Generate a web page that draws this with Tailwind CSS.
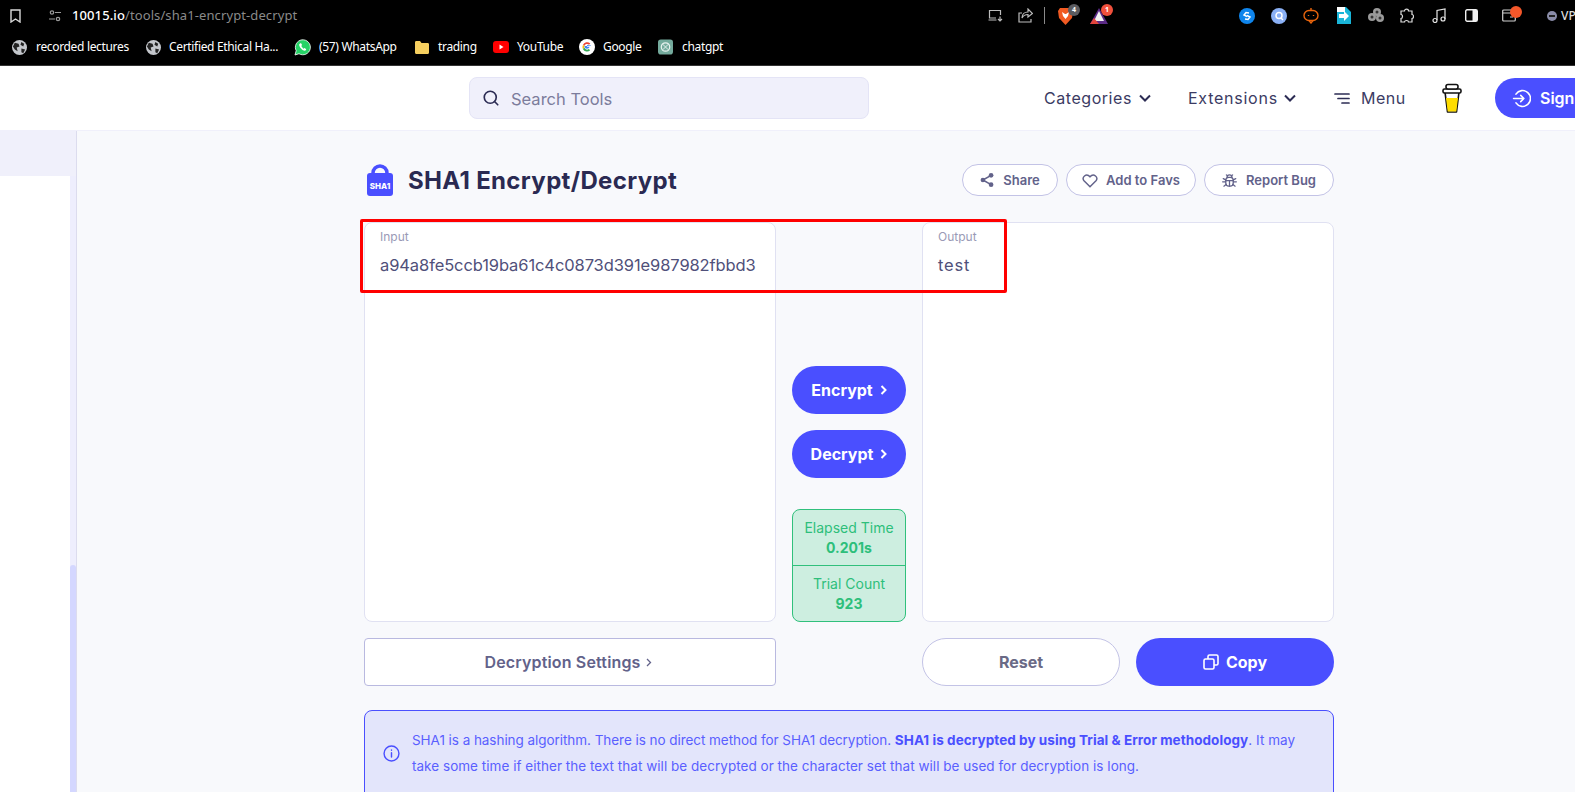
<!DOCTYPE html>
<html>
<head>
<meta charset="utf-8">
<script src="https://cdn.jsdelivr.net/npm/@tailwindcss/browser@4"></script>
</head>
<body class="w-[1575px] h-[792px] overflow-hidden bg-white font-['Inter',sans-serif]">
<div class="relative w-[1575px] h-[792px] overflow-hidden flex flex-col">

  <!-- Browser chrome -->
  <div class="h-[66px] shrink-0 bg-black border-b border-[#333] font-['Noto_Sans',sans-serif] text-white">
    <div class="h-[31px] flex items-center relative">
      <svg class="ml-[10px] w-[11px] h-[14px] shrink-0" viewBox="0 0 11 14" fill="none" stroke="#d8d8d8" stroke-width="1.4"><path d="M1 1h9v12l-4.500-3L1 13z"/></svg>
      <svg class="ml-[28px] w-[12px] h-[12px] shrink-0" viewBox="0 0 12 12" fill="none" stroke="#9a9a9a" stroke-width="1.2"><circle cx="3" cy="2.500" r="1.700"/><path d="M6 2.500h6M0 9h6"/><circle cx="9" cy="9" r="1.700"/></svg>
      <span class="ml-[11px] w-[226px] shrink-0 text-[13px] tracking-[0.1px] whitespace-nowrap font-medium">10015.io<span class="text-[#8a8a8a] font-normal">/tools/sha1-encrypt-decrypt</span></span>

      <svg class="ml-[690px] w-[15px] h-[13px] shrink-0" viewBox="0 0 15 13" fill="none" stroke="#bdbdbd" stroke-width="1.200"><path d="M8 9H1.500V1.500h11V6M.5 11h8M12 7.500v4m-2-1.500 2 2 2-2"/></svg>
      <svg class="ml-[15px] w-[15px] h-[15px] shrink-0" viewBox="0 0 15 15" fill="none" stroke="#bdbdbd" stroke-width="1.200"><path d="M4 5H1v9h12v-3M4 10c0-4 3-6 6-6V1l4.500 4.500L10 9V6.500C7.500 6.500 5 8 4 10z"/></svg>
      <span class="ml-[11px] w-px h-[17px] shrink-0 bg-[#8a8a8a]"></span>
      <span class="ml-[13px] relative w-[15px] h-[18px] shrink-0">
        <svg class="w-[15px] h-[18px]" viewBox="0 0 15 18"><path d="M2 1h11l2 3-1 7-6.500 7L1 11 0 4z" fill="#f15a22"/><path d="M4 5l3 2 1 0 3-2-1 4-2.500 3L5 9z" fill="#fff"/></svg>
        <span class="absolute left-[10px] top-[-3px] w-[12px] h-[12px] rounded-full bg-[#5c5c60] text-[7px] leading-[12px] text-center font-bold">4</span>
      </span>
      <span class="ml-[17px] relative w-[18px] h-[16px] shrink-0">
        <svg class="w-[18px] h-[16px]" viewBox="0 0 18 16"><path d="M9 0l9 16H0z" fill="#5b2a86"/><path d="M9 3l5 10H4z" fill="#f0f0f0"/><path d="M0 16l4-6 5 6z" fill="#e2453c"/></svg>
        <span class="absolute left-[11px] top-[-4px] w-[12px] h-[12px] rounded-full bg-[#f0503c] text-[7px] leading-[12px] text-center font-bold">1</span>
      </span>

      <svg class="ml-[131px] w-[16px] h-[16px] shrink-0" viewBox="0 0 16 16"><circle cx="8" cy="8" r="8" fill="#0f85ec"/><path d="M10 5L7 4.500 5 7l3 1.500M6 11l3 .5L11 9 8 7.500" fill="none" stroke="#fff" stroke-width="1.500"/></svg>
      <svg class="ml-[16px] w-[16px] h-[16px] shrink-0" viewBox="0 0 16 16"><circle cx="8" cy="8" r="8" fill="#8ab0f5"/><circle cx="8" cy="7.500" r="3" fill="none" stroke="#fff" stroke-width="1.500"/><path d="M10 10l2 2" stroke="#fff" stroke-width="1.500"/></svg>
      <svg class="ml-[16px] w-[16px] h-[17px] shrink-0" viewBox="0 0 16 17" fill="none" stroke="#e8640c" stroke-width="1.400"><rect x="1" y="3.500" width="14" height="10" rx="5"/><path d="M8 1v2.500M6 13.500l2 2.500 2-2.500"/><path d="M5.500 8v1M10.500 8v1"/></svg>
      <svg class="ml-[17px] w-[15px] h-[17px] shrink-0" viewBox="0 0 15 17"><path d="M1 0h9l5 5v12H1z" fill="#19b5d8"/><path d="M1 0h8v5H1z" fill="#fff"/><path d="M3 7h5V4l5 5-5 5v-3H3z" fill="#fff"/></svg>
      <svg class="ml-[17px] w-[16px] h-[15px] shrink-0" viewBox="0 0 16 15" fill="#9a9a9a"><circle cx="4" cy="9" r="4"/><circle cx="9" cy="4" r="4"/><circle cx="12" cy="10" r="4"/><circle cx="4" cy="9" r="1.500" fill="#333"/><circle cx="9" cy="4" r="1.500" fill="#333"/><circle cx="12" cy="10" r="1.500" fill="#333"/></svg>
      <svg class="ml-[15px] w-[15px] h-[15px] shrink-0" viewBox="0 0 15 15" fill="none" stroke="#dcdcdc" stroke-width="1.200"><path d="M5.500 3C5.500.5 9.500.5 9.500 3H13v3.500c2 0 2 4 0 4V14H9.500c0-2-4-2-4 0H2v-3.500c2 0 2-4 0-4V3z"/></svg>
      <svg class="ml-[18px] w-[14px] h-[15px] shrink-0" viewBox="0 0 14 15" fill="none" stroke="#e6e6e6" stroke-width="1.200"><path d="M5 12V2.500L13 1v10"/><circle cx="3" cy="12.500" r="2"/><circle cx="11" cy="11" r="2"/></svg>
      <svg class="ml-[19px] w-[13px] h-[13px] shrink-0" viewBox="0 0 13 13"><rect x=".7" y=".7" width="11.600" height="11.600" rx="1.500" fill="none" stroke="#f0f0f0" stroke-width="1.400"/><rect x="7.500" y="1" width="4.500" height="11" fill="#f0f0f0"/></svg>
      <span class="ml-[24px] relative w-[14px] h-[13px] shrink-0">
        <svg class="w-[14px] h-[13px]" viewBox="0 0 14 13" fill="none" stroke="#cfcfcf" stroke-width="1.200"><rect x=".7" y="1" width="12.600" height="11" rx="1"/><path d="M.7 4h12.600M8 8h3"/></svg>
        <span class="absolute left-[8px] top-[-3px] w-[12px] h-[12px] rounded-full bg-[#f4572a]"></span>
      </span>
      <span class="ml-[31px] w-[10px] h-[10px] shrink-0 rounded-full bg-[#8a8ca8] flex items-center justify-center"><span class="w-[6px] h-[2px] bg-[#222]"></span></span>
      <span class="ml-[4px] text-[12px] font-medium text-[#ddd] whitespace-nowrap">VP</span>
    </div>
    <div class="h-[32px] flex items-center pl-[12px] text-[12px] tracking-[-0.33px] whitespace-nowrap">
      <svg class="w-[15px] h-[15px] mr-[9px]" viewBox="0 0 16 16"><circle cx="8" cy="8" r="8" fill="#c4c7cc"/><path d="M3 3l4 1 1 3-3 1 1 4-3-2-2-3zM10 2l3 2-1 3-3-2zM10 9l4 1-2 4-2-1z" fill="#222"/></svg>
      <span class="w-[92px]">recorded lectures</span>
      <svg class="w-[15px] h-[15px] ml-[18px] mr-[8px]" viewBox="0 0 16 16"><circle cx="8" cy="8" r="8" fill="#c4c7cc"/><path d="M3 3l4 1 1 3-3 1 1 4-3-2-2-3zM10 2l3 2-1 3-3-2zM10 9l4 1-2 4-2-1z" fill="#222"/></svg>
      <span class="w-[110px]">Certified Ethical Ha...</span>
      <svg class="w-[17px] h-[17px] ml-[15px] mr-[8px]" viewBox="0 0 17 17"><path d="M1 16l1.200-4.300A7.500 7.500 0 1 1 5 14.700z" fill="#25d366" stroke="#fff" stroke-width=".8"/><path d="M6 4.500c-2 1 0 4 1.500 5.500s3.500 2.500 4.500 1c.5-1-.2-1.300-1.500-2l-1 .8C9 9.300 7.800 8 7.300 7l.7-1C7.500 4.700 7 4 6 4.500z" fill="#fff"/></svg>
      <span class="w-[78px]">(57) WhatsApp</span>
      <svg class="w-[16px] h-[14px] ml-[17px] mr-[8px]" viewBox="0 0 16 14"><path d="M1 2.500C1 1.500 1.500 1 2.500 1H6l1.500 2h6c1 0 1.500.5 1.500 1.500v8c0 .8-.5 1.500-1.500 1.500h-11C1.500 14 1 13.300 1 12.500z" fill="#f6cf5f"/></svg>
      <span class="w-[37px]">trading</span>
      <svg class="w-[16px] h-[12px] ml-[18px] mr-[8px]" viewBox="0 0 16 12"><rect width="16" height="12" rx="3" fill="#f00"/><path d="M6.500 3.500l4 2.500-4 2.500z" fill="#fff"/></svg>
      <span class="w-[45px]">YouTube</span>
      <svg class="w-[16px] h-[16px] ml-[17px] mr-[8px]" viewBox="0 0 16 16"><circle cx="8" cy="8" r="8" fill="#fff"/><path d="M12.500 6H8v1.800h2.600c-.3 1.200-1.300 1.900-2.600 1.900A2.700 2.700 0 0 1 5.400 7" fill="#4285f4"/><path d="M5.300 7A2.800 2.800 0 0 1 10 5.800l1.300-1.300A4.600 4.600 0 0 0 3.900 6z" fill="#ea4335"/><path d="M3.900 6a4.600 4.600 0 0 0 0 4l1.500-1.200A2.800 2.800 0 0 1 5.300 7z" fill="#fbbc05"/><path d="M3.900 10a4.600 4.600 0 0 0 7.300 1.300L9.800 10a2.800 2.800 0 0 1-4.400-1.200z" fill="#34a853"/></svg>
      <span class="w-[38px]">Google</span>
      <svg class="w-[15px] h-[16px] ml-[17px] mr-[9px]" viewBox="0 0 16 16"><rect width="16" height="16" rx="3" fill="#74aa9c"/><circle cx="8" cy="8" r="4.500" fill="none" stroke="#e8f2ef" stroke-width="1.300"/><path d="M5 5l6 6M11 5l-6 6" stroke="#e8f2ef"/></svg>
      <span>chatgpt</span>
    </div>
  </div>

  <!-- Site header -->
  <header class="h-[64px] shrink-0 bg-white flex items-center text-[#3b3b63] whitespace-nowrap">
    <div class="ml-[469px] w-[400px] h-[42px] shrink-0 rounded-lg bg-[#f0f0fb] border border-[#e4e4f6] flex items-center pl-[12px]">
      <svg class="w-[18px] h-[18px] text-[#2c2c54]" viewBox="0 0 24 24" fill="none" stroke="currentColor" stroke-width="2.200" stroke-linecap="round"><circle cx="11" cy="11" r="8"/><path d="M21 21l-4.300-4.300"/></svg>
      <span class="ml-[11px] mt-[3px] text-[16.500px] text-[#7c7c9c]">Search Tools</span>
    </div>
    <span class="ml-[175px] w-[90px] shrink-0 text-[16px] tracking-[0.55px]">Categories</span>
    <svg class="ml-[5px] w-[12px] h-[8px] shrink-0" viewBox="0 0 12 8" fill="none" stroke="#2c2c54" stroke-width="2"><path d="M1 1.500l5 5 5-5"/></svg>
    <span class="ml-[37px] w-[91px] shrink-0 text-[16px] tracking-[0.75px]">Extensions</span>
    <svg class="ml-[5px] w-[12px] h-[8px] shrink-0" viewBox="0 0 12 8" fill="none" stroke="#2c2c54" stroke-width="2"><path d="M1 1.500l5 5 5-5"/></svg>
    <svg class="ml-[38px] w-[16px] h-[11px] shrink-0" viewBox="0 0 16 11" fill="none" stroke="#2c2c54" stroke-width="1.700" stroke-linecap="round"><path d="M1 1h14M4 5.500h11M8 10h7"/></svg>
    <span class="ml-[11px] w-[44px] shrink-0 text-[16px] tracking-[0.5px]">Menu</span>
    <svg class="ml-[37px] w-[20px] h-[30px] shrink-0" viewBox="0 0 20 30"><path d="M3 9l2.500 20h9L17 9z" fill="#fff" stroke="#111" stroke-width="1.600" stroke-linejoin="round"/><path d="M4 15l1.700 13.500h8.600L16 15z" fill="#ffdd00"/><rect x="1" y="6" width="18" height="4" rx="1.500" fill="#fff" stroke="#111" stroke-width="1.600"/><rect x="4" y="1.500" width="12" height="4.500" rx="2" fill="#fff" stroke="#111" stroke-width="1.600"/></svg>
    <div class="ml-[33px] w-[140px] h-[40px] shrink-0 rounded-full bg-[#4a4fff] flex items-center pl-[17px] text-white">
      <svg class="w-[19px] h-[19px]" viewBox="0 0 24 24" fill="none" stroke="currentColor" stroke-width="2" stroke-linecap="round" stroke-linejoin="round"><path d="M5 6.500A10 10 0 1 1 5 17.500"/><path d="M2 12h13M11 8l4 4-4 4"/></svg>
      <span class="ml-[9px] text-[16px] font-semibold">Sign</span>
    </div>
  </header>

  <!-- Page body -->
  <div class="flex-1 min-h-0 flex bg-[#f8f9fc] border-t border-[#f0f0fb]">
    <aside class="w-[77px] shrink-0 flex flex-col border-r border-[#dcdcee] overflow-hidden">
      <div class="h-[45px] shrink-0 bg-[#f0f0fb]"></div>
      <div class="flex-1 min-h-0 flex bg-white">
        <div class="flex-1"></div>
        <div class="w-[6px] bg-[#eeeefd] pt-[389px]"><div class="h-[300px] rounded-t-full bg-[#d4d7ff]"></div></div>
      </div>
    </aside>

    <main class="w-[970px] ml-[287px] pt-[33px] shrink-0">
      <div class="h-[32px] flex items-center">
        <svg class="w-[26px] h-[32px] ml-[3px]" viewBox="0 0 26 32"><path d="M6 12V9a7 7 0 0 1 14 0v3" fill="none" stroke="#4a4fff" stroke-width="3.500"/><rect y="9" width="26" height="23" rx="3" fill="#4a4fff"/><text x="13" y="25" text-anchor="middle" font-family="Inter, sans-serif" font-size="8" font-weight="800" fill="#fff">SHA1</text></svg>
        <h1 class="ml-[15px] mt-[2px] text-[24px] leading-none font-bold text-[#2a2a52] tracking-[0.35px] whitespace-nowrap">SHA1 Encrypt/Decrypt</h1>
        <div class="ml-auto flex gap-[8px] text-[13px] font-semibold text-[#62628a]">
          <div class="w-[96px] h-[32px] rounded-full border border-[#c3c3e6] bg-white flex items-center justify-center gap-[9px]">
            <svg class="w-[14px] h-[14px]" viewBox="0 0 24 24" fill="currentColor"><circle cx="19" cy="4" r="4"/><circle cx="5" cy="12" r="4"/><circle cx="19" cy="20" r="4"/><path d="M5 12L19 4M5 12l14 8" stroke="currentColor" stroke-width="2.500" fill="none"/></svg>
            <span class="mt-[1px]">Share</span>
          </div>
          <div class="w-[130px] h-[32px] rounded-full border border-[#c3c3e6] bg-white flex items-center justify-center gap-[8px]">
            <svg class="w-[16px] h-[15px]" viewBox="0 0 24 22" fill="none" stroke="currentColor" stroke-width="2.200"><path d="M12 20.500L3 11.500C-1.500 6.500 6.500-1 12 5.500 17.500-1 25.500 6.500 21 11.500z"/></svg>
            <span class="mt-[1px]">Add to Favs</span>
          </div>
          <div class="w-[130px] h-[32px] rounded-full border border-[#c3c3e6] bg-white flex items-center justify-center gap-[9px]">
            <svg class="w-[15px] h-[15px]" viewBox="0 0 24 24" fill="none" stroke="currentColor" stroke-width="2" stroke-linecap="round"><rect x="6" y="7" width="12" height="14" rx="5"/><path d="M8 7a4 4 0 0 1 8 0M7 3l2 2M17 3l-2 2M6 12h12M12 12v9M2 9l4 2M22 9l-4 2M1 14h5M23 14h-5M3 21l4-3M21 21l-4-3"/></svg>
            <span class="mt-[1px]">Report Bug</span>
          </div>
        </div>
      </div>

      <div class="mt-[26px] grid grid-cols-[412px_114px_412px] gap-x-[16px]">
        <div class="h-[400px] rounded-lg bg-white border border-[#e0e1f2] pl-[15px] pt-[6px]">
          <div class="text-[12px] leading-[16px] text-[#9a9ab6]">Input</div>
          <div class="mt-[8px] text-[16.500px] leading-[24px] tracking-[-0.1px] text-[#50507a] whitespace-nowrap">a94a8fe5ccb19ba61c4c0873d391e987982fbbd3</div>
        </div>
        <div class="h-[400px] flex flex-col pt-[144px]">
          <button class="h-[48px] rounded-full bg-[#4a4fff] text-white text-[16px] font-bold flex items-center justify-center gap-[7px]">Encrypt
            <svg class="w-[7px] h-[10px]" viewBox="0 0 7 10" fill="none" stroke="#fff" stroke-width="2"><path d="M1.500 1l4 4-4 4"/></svg></button>
          <button class="mt-[16px] h-[48px] rounded-full bg-[#4a4fff] text-white text-[16px] font-bold flex items-center justify-center gap-[7px]">Decrypt
            <svg class="w-[7px] h-[10px]" viewBox="0 0 7 10" fill="none" stroke="#fff" stroke-width="2"><path d="M1.500 1l4 4-4 4"/></svg></button>
          <div class="mt-[31px] h-[113px] rounded-lg border border-[#30c07c] bg-[#cdeee0] text-[#2dbf7b] text-center text-[14px] flex flex-col">
            <div class="h-[56px] border-b border-[#30c07c] pt-[8px] leading-[20px]">Elapsed Time<div class="font-bold">0.201s</div></div>
            <div class="flex-1 pt-[8px] leading-[20px]">Trial Count<div class="font-bold">923</div></div>
          </div>
        </div>
        <div class="h-[400px] rounded-lg bg-white border border-[#e0e1f2] pl-[15px] pt-[6px]">
          <div class="text-[12px] leading-[16px] text-[#9a9ab6]">Output</div>
          <div class="mt-[8px] text-[16.500px] leading-[24px] tracking-[0.8px] text-[#50507a]">test</div>
        </div>

        <div class="mt-[16px] h-[48px] rounded bg-white border border-[#b9b9e0] flex items-center justify-center gap-[5px] pr-[4px] text-[16px] font-semibold tracking-[0.15px] text-[#62628a]">Decryption Settings
          <svg class="w-[6px] h-[9px]" viewBox="0 0 6 9" fill="none" stroke="#62628a" stroke-width="1.300"><path d="M1 1l3.500 3.500L1 8"/></svg>
        </div>
        <div></div>
        <div class="mt-[16px] flex gap-[16px]">
          <div class="w-[198px] h-[48px] rounded-full bg-white border border-[#c3c3e6] flex items-center justify-center text-[16px] font-bold text-[#6a6a86]">Reset</div>
          <div class="w-[198px] h-[48px] rounded-full bg-[#4a4fff] text-white flex items-center justify-center gap-[7px] text-[16px] font-bold">
            <svg class="w-[16px] h-[16px]" viewBox="0 0 16 16" fill="none" stroke="#fff" stroke-width="1.600"><rect x="1" y="5" width="10" height="10" rx="1.500"/><path d="M5 5V2.500C5 1.500 5.500 1 6.500 1h7c1 0 1.500.5 1.500 1.500v7c0 1-.5 1.500-1.500 1.500H11"/></svg>
            <span>Copy</span>
          </div>
        </div>
      </div>

      <div class="mt-[24px] h-[90px] rounded-lg border border-[#4a4fff] bg-[#e3e5fb] flex items-start text-[#5a5fff] text-[13.500px] leading-[26px]">
        <svg class="ml-[18px] mt-[34px] w-[17px] h-[17px] shrink-0" viewBox="0 0 24 24" fill="none" stroke="#4a4fff" stroke-width="2" stroke-linecap="round"><circle cx="12" cy="12" r="10.500"/><path d="M12 11v6M12 7v.5"/></svg>
        <p class="ml-[12px] mt-[16px] w-[900px] tracking-[0.03px]"><span class="tracking-[-0.05px]">SHA1 is a hashing algorithm. There is no direct method for SHA1 decryption.</span> <b class="font-bold text-[#4a4fff] tracking-[0.06px]">SHA1 is decrypted by using Trial &amp; Error methodology</b>. It may<br>take some time if either the text that will be decrypted or the character set that will be used for decryption is long.</p>
      </div>
    </main>
  </div>

  <!-- Red annotation rectangle drawn over the screenshot -->
  <div class="absolute left-[360px] top-[219px] w-[647px] h-[74px] border-[3px] border-[#ff0000] rounded-[2px] pointer-events-none"></div>
</div>
</body>
</html>
